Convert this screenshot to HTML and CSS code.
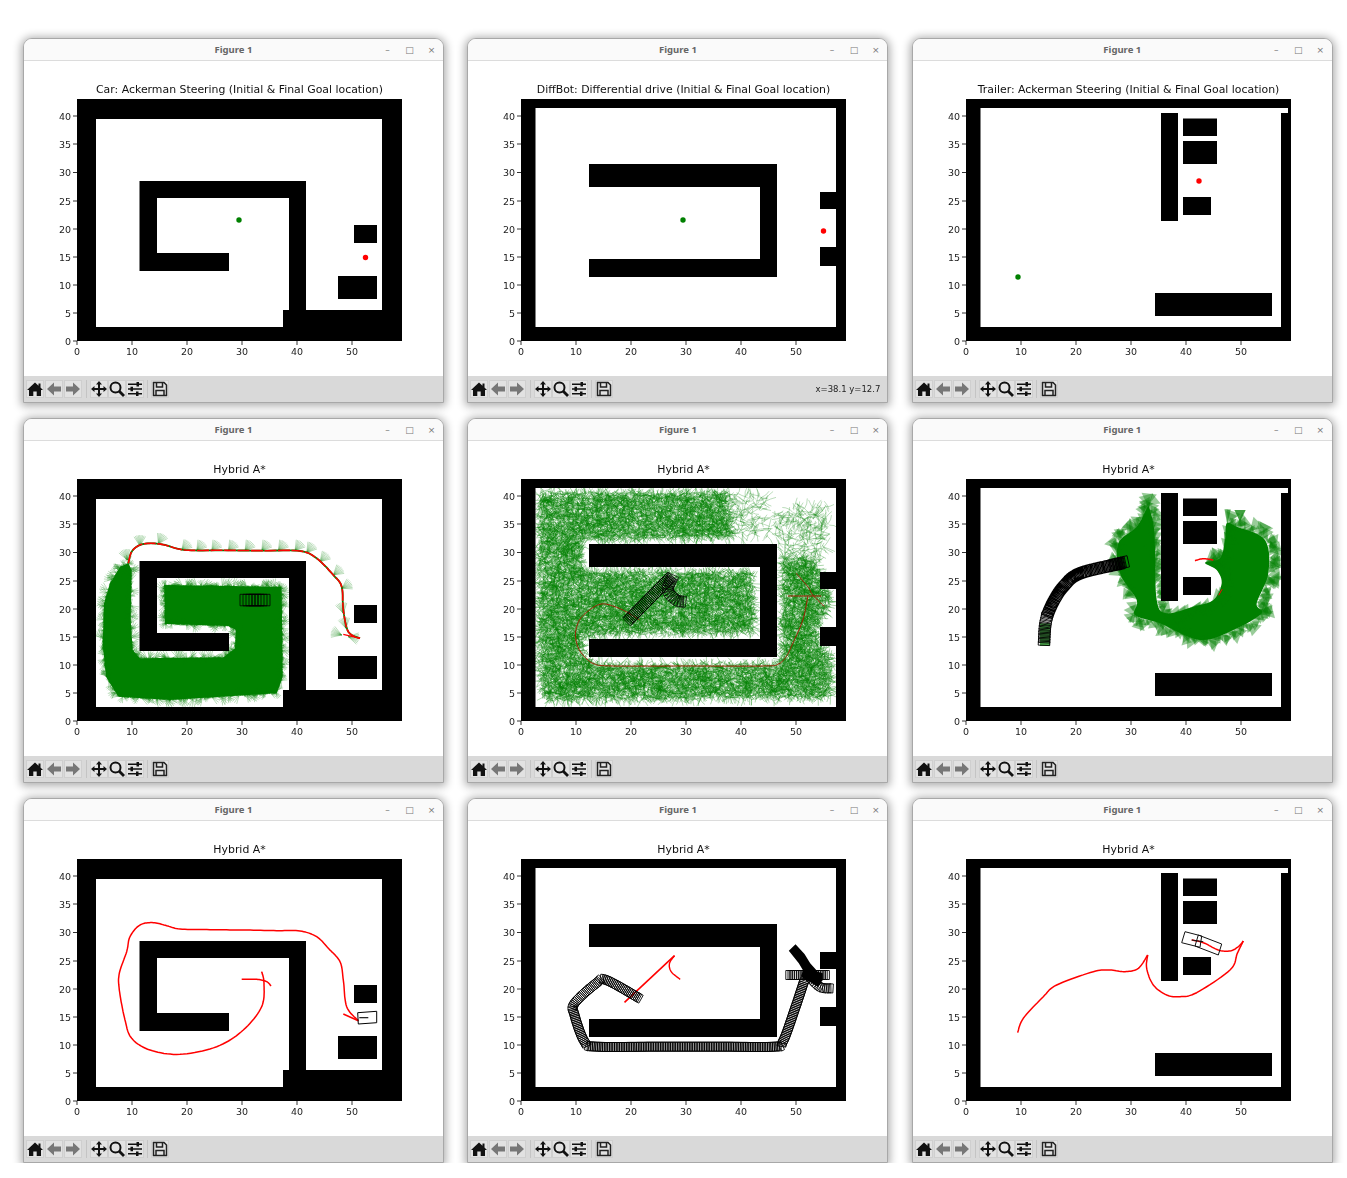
FILE: index.html
```html
<!DOCTYPE html>
<html>
<head>
<meta charset="utf-8">
<title>Hybrid A* figures</title>
<link rel="stylesheet" href="styles.css">
</head>
<body>

<!-- shared drawings, coordinates are those of the first window on the page -->
<svg class="defs">
  <defs>
    <path id="map-car" fill-rule="evenodd" d="M77 99H402V341H77Z M96 119H382V310H306V181H139.500V271H229V253H157V198H289V310H283V327H96Z M354 225H377V243H354Z M338 276H377V299H338Z"/>
    <path id="map-bot" fill-rule="evenodd" d="M77 99H402V341H77Z M91.500 108H392V192H376V209H392V247H376V266H392V327H91.500Z M145 164H333V277H145V259H316V187H145Z"/>
    <path id="map-trailer" fill-rule="evenodd" d="M77 99H402V341H77Z M91.500 108H399V113H392V327H91.500Z M272 113H289V221H272Z M294 118.500H328V136H294Z M294 141H328V164H294Z M294 197H322V215H294Z M266 293H383V316H266Z"/>
    <path id="ticks" stroke="#000" stroke-width="0.8" d="M77 341V345M132 341V345M187 341V345M242 341V345M297 341V345M352 341V345M73 341H77M73 313H77M73 285H77M73 257H77M73 229H77M73 201H77M73 172.500H77M73 144H77M73 116H77"/>
    <path id="i-home" d="M8 1.500 11.500 4.700V2.500H13.500V6.500L16 9H14V15H9.700V10.500H6.300V15H2V9H0Z"/>
    <path id="i-back" d="M1 8 8 1.500V5.500H15V10.500H8V14.500Z"/>
    <path id="i-forward" d="M15 8 8 1.500V5.500H1V10.500H8V14.500Z"/>
    <path id="i-pan" d="M8 0 11 3.500H9V7H12.500V5L16 8 12.500 11V9H9V12.500H11L8 16 5 12.500H7V9H3.500V11L0 8 3.500 5V7H7V3.500H5Z"/>
    <g id="i-zoom" fill="none" stroke="#111"><circle cx="6.500" cy="6.500" r="5" stroke-width="2"/><path d="M10 10 15 15" stroke-width="2.800"/></g>
    <path id="i-sliders" d="M1 2.500H15V4H1ZM1 7.300H15V8.700H1ZM1 12H15V13.500H1ZM9.500 1H12V5.500H9.500ZM3.500 5.800H6V10.200H3.500ZM9 10.500H11.500V15H9Z"/>
    <g id="i-save" fill="none" stroke="#222" stroke-width="1.500"><path d="M1.500 1.500H12L14.500 4V14.500H1.500Z"/><path d="M4.500 1.500V6H10.500V1.500M4 14.500V9.500H12V14.500"/></g>
  </defs>
</svg>

<div class="figures">

  <div class="window">
    <div class="titlebar"><span></span><span class="name">Figure 1</span><span class="ctls"><span>–</span><span>□</span><span>×</span></span></div>
    <svg class="canvas" viewBox="24 61 419 315">
      <text class="plot-title" x="239.500" y="93">Car: Ackerman Steering (Initial &amp; Final Goal location)</text>
      <use href="#map-car"/><use href="#ticks"/>
      <circle cx="239" cy="220" r="2.700" fill="#008000"/><circle cx="365.500" cy="257.500" r="2.700" fill="#f00"/>
      <g class="xl"><text x="77" y="354.500">0</text><text x="132" y="354.500">10</text><text x="187" y="354.500">20</text><text x="242" y="354.500">30</text><text x="297" y="354.500">40</text><text x="352" y="354.500">50</text></g>
      <g class="yl"><text x="71" y="344.500">0</text><text x="71" y="316.500">5</text><text x="71" y="288.500">10</text><text x="71" y="260.500">15</text><text x="71" y="232.500">20</text><text x="71" y="204.500">25</text><text x="71" y="176">30</text><text x="71" y="147.500">35</text><text x="71" y="119.500">40</text></g>
    </svg>
    <div class="toolbar">
      <div class="tool"><svg viewBox="0 0 16 16"><use href="#i-home"/></svg></div><div class="tool off"><svg viewBox="0 0 16 16"><use href="#i-back"/></svg></div><div class="tool off"><svg viewBox="0 0 16 16"><use href="#i-forward"/></svg></div>
      <div class="sep"></div>
      <div class="tool tight"><svg viewBox="0 0 16 16"><use href="#i-pan"/></svg></div><div class="tool tight"><svg viewBox="0 0 16 16"><use href="#i-zoom"/></svg></div><div class="tool tight"><svg viewBox="0 0 16 16"><use href="#i-sliders"/></svg></div>
      <div class="sep"></div>
      <div class="tool"><svg viewBox="0 0 16 16"><use href="#i-save"/></svg></div>
    </div>
  </div>

  <div class="window">
    <div class="titlebar"><span></span><span class="name">Figure 1</span><span class="ctls"><span>–</span><span>□</span><span>×</span></span></div>
    <svg class="canvas" viewBox="24 61 419 315">
      <text class="plot-title" x="239.500" y="93">DiffBot: Differential drive (Initial &amp; Final Goal location)</text>
      <use href="#map-bot"/><use href="#ticks"/>
      <circle cx="239" cy="220" r="2.700" fill="#008000"/><circle cx="379.500" cy="231" r="2.700" fill="#f00"/>
      <g class="xl"><text x="77" y="354.500">0</text><text x="132" y="354.500">10</text><text x="187" y="354.500">20</text><text x="242" y="354.500">30</text><text x="297" y="354.500">40</text><text x="352" y="354.500">50</text></g>
      <g class="yl"><text x="71" y="344.500">0</text><text x="71" y="316.500">5</text><text x="71" y="288.500">10</text><text x="71" y="260.500">15</text><text x="71" y="232.500">20</text><text x="71" y="204.500">25</text><text x="71" y="176">30</text><text x="71" y="147.500">35</text><text x="71" y="119.500">40</text></g>
    </svg>
    <div class="toolbar">
      <div class="tool"><svg viewBox="0 0 16 16"><use href="#i-home"/></svg></div><div class="tool off"><svg viewBox="0 0 16 16"><use href="#i-back"/></svg></div><div class="tool off"><svg viewBox="0 0 16 16"><use href="#i-forward"/></svg></div>
      <div class="sep"></div>
      <div class="tool tight"><svg viewBox="0 0 16 16"><use href="#i-pan"/></svg></div><div class="tool tight"><svg viewBox="0 0 16 16"><use href="#i-zoom"/></svg></div><div class="tool tight"><svg viewBox="0 0 16 16"><use href="#i-sliders"/></svg></div>
      <div class="sep"></div>
      <div class="tool"><svg viewBox="0 0 16 16"><use href="#i-save"/></svg></div>
      <span class="status">x=38.1 y=12.7</span>
    </div>
  </div>

  <div class="window">
    <div class="titlebar"><span></span><span class="name">Figure 1</span><span class="ctls"><span>–</span><span>□</span><span>×</span></span></div>
    <svg class="canvas" viewBox="24 61 419 315">
      <text class="plot-title" x="239.500" y="93">Trailer: Ackerman Steering (Initial &amp; Final Goal location)</text>
      <use href="#map-trailer"/><use href="#ticks"/>
      <circle cx="129" cy="277" r="2.700" fill="#008000"/><circle cx="310" cy="181" r="2.700" fill="#f00"/>
      <g class="xl"><text x="77" y="354.500">0</text><text x="132" y="354.500">10</text><text x="187" y="354.500">20</text><text x="242" y="354.500">30</text><text x="297" y="354.500">40</text><text x="352" y="354.500">50</text></g>
      <g class="yl"><text x="71" y="344.500">0</text><text x="71" y="316.500">5</text><text x="71" y="288.500">10</text><text x="71" y="260.500">15</text><text x="71" y="232.500">20</text><text x="71" y="204.500">25</text><text x="71" y="176">30</text><text x="71" y="147.500">35</text><text x="71" y="119.500">40</text></g>
    </svg>
    <div class="toolbar">
      <div class="tool"><svg viewBox="0 0 16 16"><use href="#i-home"/></svg></div><div class="tool off"><svg viewBox="0 0 16 16"><use href="#i-back"/></svg></div><div class="tool off"><svg viewBox="0 0 16 16"><use href="#i-forward"/></svg></div>
      <div class="sep"></div>
      <div class="tool tight"><svg viewBox="0 0 16 16"><use href="#i-pan"/></svg></div><div class="tool tight"><svg viewBox="0 0 16 16"><use href="#i-zoom"/></svg></div><div class="tool tight"><svg viewBox="0 0 16 16"><use href="#i-sliders"/></svg></div>
      <div class="sep"></div>
      <div class="tool"><svg viewBox="0 0 16 16"><use href="#i-save"/></svg></div>
    </div>
  </div>

  <div class="window">
    <div class="titlebar"><span></span><span class="name">Figure 1</span><span class="ctls"><span>–</span><span>□</span><span>×</span></span></div>
    <svg class="canvas" viewBox="24 61 419 315">
      <text class="plot-title" x="239.500" y="93">Hybrid A*</text>
      <g id="search-car"></g>
      <use href="#map-car"/><use href="#ticks"/>
      <g id="search-car-top"></g>
      <g class="xl"><text x="77" y="354.500">0</text><text x="132" y="354.500">10</text><text x="187" y="354.500">20</text><text x="242" y="354.500">30</text><text x="297" y="354.500">40</text><text x="352" y="354.500">50</text></g>
      <g class="yl"><text x="71" y="344.500">0</text><text x="71" y="316.500">5</text><text x="71" y="288.500">10</text><text x="71" y="260.500">15</text><text x="71" y="232.500">20</text><text x="71" y="204.500">25</text><text x="71" y="176">30</text><text x="71" y="147.500">35</text><text x="71" y="119.500">40</text></g>
    </svg>
    <div class="toolbar">
      <div class="tool"><svg viewBox="0 0 16 16"><use href="#i-home"/></svg></div><div class="tool off"><svg viewBox="0 0 16 16"><use href="#i-back"/></svg></div><div class="tool off"><svg viewBox="0 0 16 16"><use href="#i-forward"/></svg></div>
      <div class="sep"></div>
      <div class="tool tight"><svg viewBox="0 0 16 16"><use href="#i-pan"/></svg></div><div class="tool tight"><svg viewBox="0 0 16 16"><use href="#i-zoom"/></svg></div><div class="tool tight"><svg viewBox="0 0 16 16"><use href="#i-sliders"/></svg></div>
      <div class="sep"></div>
      <div class="tool"><svg viewBox="0 0 16 16"><use href="#i-save"/></svg></div>
    </div>
  </div>

  <div class="window">
    <div class="titlebar"><span></span><span class="name">Figure 1</span><span class="ctls"><span>–</span><span>□</span><span>×</span></span></div>
    <svg class="canvas" viewBox="24 61 419 315">
      <text class="plot-title" x="239.500" y="93">Hybrid A*</text>
      <g id="search-bot"></g>
      <use href="#map-bot"/><use href="#ticks"/>
      <g id="search-bot-top"></g>
      <g class="xl"><text x="77" y="354.500">0</text><text x="132" y="354.500">10</text><text x="187" y="354.500">20</text><text x="242" y="354.500">30</text><text x="297" y="354.500">40</text><text x="352" y="354.500">50</text></g>
      <g class="yl"><text x="71" y="344.500">0</text><text x="71" y="316.500">5</text><text x="71" y="288.500">10</text><text x="71" y="260.500">15</text><text x="71" y="232.500">20</text><text x="71" y="204.500">25</text><text x="71" y="176">30</text><text x="71" y="147.500">35</text><text x="71" y="119.500">40</text></g>
    </svg>
    <div class="toolbar">
      <div class="tool"><svg viewBox="0 0 16 16"><use href="#i-home"/></svg></div><div class="tool off"><svg viewBox="0 0 16 16"><use href="#i-back"/></svg></div><div class="tool off"><svg viewBox="0 0 16 16"><use href="#i-forward"/></svg></div>
      <div class="sep"></div>
      <div class="tool tight"><svg viewBox="0 0 16 16"><use href="#i-pan"/></svg></div><div class="tool tight"><svg viewBox="0 0 16 16"><use href="#i-zoom"/></svg></div><div class="tool tight"><svg viewBox="0 0 16 16"><use href="#i-sliders"/></svg></div>
      <div class="sep"></div>
      <div class="tool"><svg viewBox="0 0 16 16"><use href="#i-save"/></svg></div>
    </div>
  </div>

  <div class="window">
    <div class="titlebar"><span></span><span class="name">Figure 1</span><span class="ctls"><span>–</span><span>□</span><span>×</span></span></div>
    <svg class="canvas" viewBox="24 61 419 315">
      <text class="plot-title" x="239.500" y="93">Hybrid A*</text>
      <g id="search-trailer"></g>
      <use href="#map-trailer"/><use href="#ticks"/>
      <g id="search-trailer-top"></g>
      <g class="xl"><text x="77" y="354.500">0</text><text x="132" y="354.500">10</text><text x="187" y="354.500">20</text><text x="242" y="354.500">30</text><text x="297" y="354.500">40</text><text x="352" y="354.500">50</text></g>
      <g class="yl"><text x="71" y="344.500">0</text><text x="71" y="316.500">5</text><text x="71" y="288.500">10</text><text x="71" y="260.500">15</text><text x="71" y="232.500">20</text><text x="71" y="204.500">25</text><text x="71" y="176">30</text><text x="71" y="147.500">35</text><text x="71" y="119.500">40</text></g>
    </svg>
    <div class="toolbar">
      <div class="tool"><svg viewBox="0 0 16 16"><use href="#i-home"/></svg></div><div class="tool off"><svg viewBox="0 0 16 16"><use href="#i-back"/></svg></div><div class="tool off"><svg viewBox="0 0 16 16"><use href="#i-forward"/></svg></div>
      <div class="sep"></div>
      <div class="tool tight"><svg viewBox="0 0 16 16"><use href="#i-pan"/></svg></div><div class="tool tight"><svg viewBox="0 0 16 16"><use href="#i-zoom"/></svg></div><div class="tool tight"><svg viewBox="0 0 16 16"><use href="#i-sliders"/></svg></div>
      <div class="sep"></div>
      <div class="tool"><svg viewBox="0 0 16 16"><use href="#i-save"/></svg></div>
    </div>
  </div>

  <div class="window">
    <div class="titlebar"><span></span><span class="name">Figure 1</span><span class="ctls"><span>–</span><span>□</span><span>×</span></span></div>
    <svg class="canvas" viewBox="24 61 419 315">
      <text class="plot-title" x="239.500" y="93">Hybrid A*</text>
      <use href="#map-car"/><use href="#ticks"/>
      <g id="final-car"></g>
      <g class="xl"><text x="77" y="354.500">0</text><text x="132" y="354.500">10</text><text x="187" y="354.500">20</text><text x="242" y="354.500">30</text><text x="297" y="354.500">40</text><text x="352" y="354.500">50</text></g>
      <g class="yl"><text x="71" y="344.500">0</text><text x="71" y="316.500">5</text><text x="71" y="288.500">10</text><text x="71" y="260.500">15</text><text x="71" y="232.500">20</text><text x="71" y="204.500">25</text><text x="71" y="176">30</text><text x="71" y="147.500">35</text><text x="71" y="119.500">40</text></g>
    </svg>
    <div class="toolbar">
      <div class="tool"><svg viewBox="0 0 16 16"><use href="#i-home"/></svg></div><div class="tool off"><svg viewBox="0 0 16 16"><use href="#i-back"/></svg></div><div class="tool off"><svg viewBox="0 0 16 16"><use href="#i-forward"/></svg></div>
      <div class="sep"></div>
      <div class="tool tight"><svg viewBox="0 0 16 16"><use href="#i-pan"/></svg></div><div class="tool tight"><svg viewBox="0 0 16 16"><use href="#i-zoom"/></svg></div><div class="tool tight"><svg viewBox="0 0 16 16"><use href="#i-sliders"/></svg></div>
      <div class="sep"></div>
      <div class="tool"><svg viewBox="0 0 16 16"><use href="#i-save"/></svg></div>
    </div>
  </div>

  <div class="window">
    <div class="titlebar"><span></span><span class="name">Figure 1</span><span class="ctls"><span>–</span><span>□</span><span>×</span></span></div>
    <svg class="canvas" viewBox="24 61 419 315">
      <text class="plot-title" x="239.500" y="93">Hybrid A*</text>
      <use href="#map-bot"/><use href="#ticks"/>
      <g id="final-bot"></g>
      <g class="xl"><text x="77" y="354.500">0</text><text x="132" y="354.500">10</text><text x="187" y="354.500">20</text><text x="242" y="354.500">30</text><text x="297" y="354.500">40</text><text x="352" y="354.500">50</text></g>
      <g class="yl"><text x="71" y="344.500">0</text><text x="71" y="316.500">5</text><text x="71" y="288.500">10</text><text x="71" y="260.500">15</text><text x="71" y="232.500">20</text><text x="71" y="204.500">25</text><text x="71" y="176">30</text><text x="71" y="147.500">35</text><text x="71" y="119.500">40</text></g>
    </svg>
    <div class="toolbar">
      <div class="tool"><svg viewBox="0 0 16 16"><use href="#i-home"/></svg></div><div class="tool off"><svg viewBox="0 0 16 16"><use href="#i-back"/></svg></div><div class="tool off"><svg viewBox="0 0 16 16"><use href="#i-forward"/></svg></div>
      <div class="sep"></div>
      <div class="tool tight"><svg viewBox="0 0 16 16"><use href="#i-pan"/></svg></div><div class="tool tight"><svg viewBox="0 0 16 16"><use href="#i-zoom"/></svg></div><div class="tool tight"><svg viewBox="0 0 16 16"><use href="#i-sliders"/></svg></div>
      <div class="sep"></div>
      <div class="tool"><svg viewBox="0 0 16 16"><use href="#i-save"/></svg></div>
    </div>
  </div>

  <div class="window">
    <div class="titlebar"><span></span><span class="name">Figure 1</span><span class="ctls"><span>–</span><span>□</span><span>×</span></span></div>
    <svg class="canvas" viewBox="24 61 419 315">
      <text class="plot-title" x="239.500" y="93">Hybrid A*</text>
      <use href="#map-trailer"/><use href="#ticks"/>
      <g id="final-trailer"></g>
      <g class="xl"><text x="77" y="354.500">0</text><text x="132" y="354.500">10</text><text x="187" y="354.500">20</text><text x="242" y="354.500">30</text><text x="297" y="354.500">40</text><text x="352" y="354.500">50</text></g>
      <g class="yl"><text x="71" y="344.500">0</text><text x="71" y="316.500">5</text><text x="71" y="288.500">10</text><text x="71" y="260.500">15</text><text x="71" y="232.500">20</text><text x="71" y="204.500">25</text><text x="71" y="176">30</text><text x="71" y="147.500">35</text><text x="71" y="119.500">40</text></g>
    </svg>
    <div class="toolbar">
      <div class="tool"><svg viewBox="0 0 16 16"><use href="#i-home"/></svg></div><div class="tool off"><svg viewBox="0 0 16 16"><use href="#i-back"/></svg></div><div class="tool off"><svg viewBox="0 0 16 16"><use href="#i-forward"/></svg></div>
      <div class="sep"></div>
      <div class="tool tight"><svg viewBox="0 0 16 16"><use href="#i-pan"/></svg></div><div class="tool tight"><svg viewBox="0 0 16 16"><use href="#i-zoom"/></svg></div><div class="tool tight"><svg viewBox="0 0 16 16"><use href="#i-sliders"/></svg></div>
      <div class="sep"></div>
      <div class="tool"><svg viewBox="0 0 16 16"><use href="#i-save"/></svg></div>
    </div>
  </div>

</div>
<script src="plots.js"></script>
</body>
</html>
```

FILE: styles.css
```css
body {
  margin: 0;
  background: #fff;
  font-family: "DejaVu Sans", sans-serif;
}

.defs {
  position: absolute;
  width: 0;
  height: 0;
}

.figures {
  display: grid;
  grid-template-columns: repeat(3, 421px);
  grid-auto-rows: 365px;
  column-gap: 23.4px;
  row-gap: 15px;
  padding: 38px 0 0 23px;
}

/* the source picture is a slightly soft scaled screenshot */
.window {
  display: flex;
  flex-direction: column;
  border: 1px solid #a8a8a8;
  border-radius: 9px 9px 0 0;
  box-shadow: 0 1px 8px 2px rgba(0, 0, 0, 0.32);
  overflow: hidden;
  background: #fff;
  filter: blur(0.35px);
}

.titlebar {
  display: grid;
  grid-template-columns: 1fr auto 1fr;
  align-items: center;
  box-sizing: border-box;
  height: 22px;
  flex: none;
  background: #fafafa;
  border-bottom: 1px solid #dcdcdc;
  color: #666;
}

.name {
  font-family: "Noto Sans", sans-serif;
  font-size: 9.500px;
  font-weight: bold;
}

.ctls {
  display: flex;
  justify-content: flex-end;
  padding-right: 0.5px;
  font-size: 9px;
  color: #777;
}

.ctls span {
  width: 22px;
  text-align: center;
}

.canvas {
  display: block;
  width: 419px;
  height: 315px;
  flex: none;
  background: #fff;
}

.plot-title {
  font-size: 10.900px;
  text-anchor: middle;
  fill: #111;
}

.xl text,
.yl text {
  font-size: 9.500px;
  fill: #222;
}

.xl text {
  text-anchor: middle;
}

.yl text {
  text-anchor: end;
}

.toolbar {
  display: flex;
  align-items: center;
  flex: 1;
  padding: 0 7px 0 2px;
  background: #d9d9d9;
}

.tool {
  width: 18px;
  height: 18px;
  margin-right: 1px;
  box-sizing: border-box;
  display: flex;
  background: #e2e2e2;
  border: 1px solid #cfcfcf;
  fill: #111;
}

.tool svg {
  width: 100%;
  height: 100%;
}

.tool.tight {
  margin-right: 0;
}

.tool.off {
  fill: #777;
}

.sep {
  width: 1px;
  height: 18px;
  margin: 0 3px 0 3px;
  background: #c4c4c4;
}

.status {
  margin-left: auto;
  font-size: 8.500px;
  color: #222;
}
```

FILE: plots.js
```js
// The search trees and paths are too many strokes to write out by hand, so they are
// drawn here. Traces were taken off 3x crops, hence the [ox, oy] + p/3 conversion.
var NS = "http://www.w3.org/2000/svg";
var GREEN = "#008000";
var seed = 12345;

// mulberry32, the simple lcg left a visible lattice in the scribbles
function rnd() {
  seed = (seed + 0x6D2B79F5) | 0;
  var t = Math.imul(seed ^ (seed >>> 15), 1 | seed);
  t = (t + Math.imul(t ^ (t >>> 7), 61 | t)) ^ t;
  return ((t ^ (t >>> 14)) >>> 0) / 4294967296;
}

function between(a, b) {
  return a + (b - a) * rnd();
}

function conv(ox, oy, pts) {
  return pts.map(function (p) { return [ox + p[0] / 3, oy + p[1] / 3]; });
}

function add(g, d, attrs) {
  var el = document.createElementNS(NS, "path");
  el.setAttribute("d", d);
  el.setAttribute("fill", "none");
  for (var k in attrs) el.setAttribute(k, attrs[k]);
  g.appendChild(el);
}

function toD(pts, close) {
  var s = "";
  for (var i = 0; i < pts.length; i++) {
    s += (i ? "L" : "M") + pts[i][0].toFixed(1) + " " + pts[i][1].toFixed(1);
  }
  return s + (close ? "Z" : "");
}

// catmull-rom through the traced points
function curve(pts) {
  var out = [];
  for (var i = 0; i < pts.length - 1; i++) {
    var a = pts[Math.max(i - 1, 0)], b = pts[i], c = pts[i + 1], d = pts[Math.min(i + 2, pts.length - 1)];
    for (var t = 0; t < 1; t += 0.1) {
      var t2 = t * t, t3 = t2 * t;
      out.push([0, 1].map(function (n) {
        return 0.5 * (2 * b[n] + (c[n] - a[n]) * t + (2 * a[n] - 5 * b[n] + 4 * c[n] - d[n]) * t2 + (3 * b[n] - a[n] - 3 * c[n] + d[n]) * t3);
      }));
    }
  }
  out.push(pts[pts.length - 1]);
  return out;
}

function inside(p, poly) {
  var hit = false;
  for (var i = 0, j = poly.length - 1; i < poly.length; j = i++) {
    if ((poly[i][1] > p[1]) != (poly[j][1] > p[1]) &&
        p[0] < (poly[j][0] - poly[i][0]) * (p[1] - poly[i][1]) / (poly[j][1] - poly[i][1]) + poly[i][0]) hit = !hit;
  }
  return hit;
}

// walk along a polyline, calling back every step pixels with position and heading
function walk(pts, step, fn) {
  var left = 0;
  for (var i = 0; i < pts.length - 1; i++) {
    var dx = pts[i + 1][0] - pts[i][0], dy = pts[i + 1][1] - pts[i][1];
    var len = Math.sqrt(dx * dx + dy * dy);
    if (len == 0) continue;
    var pos = left;
    while (pos < len) {
      fn([pts[i][0] + dx * pos / len, pts[i][1] + dy * pos / len], Math.atan2(dy, dx));
      pos += step;
    }
    left = pos - len;
  }
}

// thin curved branches scattered over a polygon
function scribble(g, poly, count, len, width, opacity) {
  var xs = poly.map(function (p) { return p[0]; }), ys = poly.map(function (p) { return p[1]; });
  var x0 = Math.min.apply(null, xs), x1 = Math.max.apply(null, xs);
  var y0 = Math.min.apply(null, ys), y1 = Math.max.apply(null, ys);
  var d = "", n = 0;
  while (n < count) {
    var p = [between(x0, x1), between(y0, y1)];
    if (!inside(p, poly)) continue;
    var a = between(0, 6.28), l = len * between(0.7, 1.3), bend = between(-0.9, 0.9);
    var cx = p[0] + Math.cos(a) * l / 2, cy = p[1] + Math.sin(a) * l / 2;
    var ex = cx + Math.cos(a + bend) * l / 2, ey = cy + Math.sin(a + bend) * l / 2;
    d += "M" + p[0].toFixed(1) + " " + p[1].toFixed(1) + "Q" + cx.toFixed(1) + " " + cy.toFixed(1) + " " + ex.toFixed(1) + " " + ey.toFixed(1);
    n++;
    if (n % 30 == 0) {
      add(g, d, { stroke: GREEN, "stroke-width": width, "stroke-opacity": opacity });
      d = "";
    }
  }
}

// fan of steering branches from one node
function fan(g, p, angle, len, spread, lines, opacity) {
  var d = "";
  for (var i = 0; i < lines; i++) {
    var a = angle - spread / 2 + spread * i / (lines - 1);
    d += "M" + p[0].toFixed(1) + " " + p[1].toFixed(1) + "L" + (p[0] + Math.cos(a) * len).toFixed(1) + " " + (p[1] + Math.sin(a) * len).toFixed(1);
  }
  add(g, d, { stroke: GREEN, "stroke-width": 0.6, "stroke-opacity": opacity });
}

function wedge(g, p, angle, len, spread, opacity) {
  var a = [p[0] + Math.cos(angle - spread / 2) * len, p[1] + Math.sin(angle - spread / 2) * len];
  var b = [p[0] + Math.cos(angle + spread / 2) * len, p[1] + Math.sin(angle + spread / 2) * len];
  add(g, toD([p, a, b], true), { fill: GREEN, "fill-opacity": opacity });
}

// vehicle footprints along a path
function footprints(g, pts, length, width, step, stroke) {
  var d = "";
  walk(pts, step, function (p, a) {
    var c = Math.cos(a), s = Math.sin(a), l = length / 2, w = width / 2;
    d += toD([
      [p[0] + c * l - s * w, p[1] + s * l + c * w],
      [p[0] + c * l + s * w, p[1] + s * l - c * w],
      [p[0] - c * l + s * w, p[1] - s * l - c * w],
      [p[0] - c * l - s * w, p[1] - s * l + c * w]
    ], true);
  });
  add(g, d, { stroke: "#000", "stroke-width": stroke });
}

function redLine(g, pts, width) {
  add(g, toD(pts), { stroke: "#f00", "stroke-width": width, "stroke-linejoin": "round" });
}

// ---- car search ----
(function () {
  var g = document.getElementById("search-car");
  var top = document.getElementById("search-car-top");
  var blob = conv(90, 140, [[115,130],[125,150],[122,300],[128,390],[150,415],[400,412],[435,385],[437,330],[415,318],[225,312],[222,195],[575,200],[578,470],[560,520],[240,540],[85,530],[48,470],[38,370],[42,250],[60,190],[90,140]]);
  add(g, toD(blob, true), { fill: GREEN });
  walk(blob.concat([blob[0]]), 1.600, function (p) {
    fan(g, p, between(0, 6.28), between(4, 9), 0.9, 4, 0.45);
  });
  var nodes = [[112,120,-1.9],[150,78,-1.6],[205,72,-1.1],[275,90,-0.8],[320,92,-0.9],[365,92,-0.9],[415,92,-0.9],[465,92,-0.9],[515,92,-0.9],[565,92,-0.9],[615,92,-0.9],[650,98,-0.9],[690,125,-0.8],[730,165,-0.7],[755,205,-0.5],[760,280,-1.8],[768,325,-1.8],[755,345,-2.8],[775,350,0.2]];
  conv(90, 140, nodes).forEach(function (n, i) {
    fan(g, n, nodes[i][2], 11, 1.100, 9, 0.45);
  });
  var route = curve(conv(90, 140, [[115,130],[125,95],[150,75],[185,70],[225,75],[285,90],[400,91],[520,92],[630,93],[680,115],[730,165],[755,200],[760,270],[775,335],[810,355]]));
  add(top, toD(route), { stroke: GREEN, "stroke-width": 1.800 });
  add(top, toD(route), { stroke: "#f00", "stroke-width": 1.600, "stroke-dasharray": "12 1.500" });
  redLine(top, conv(90, 140, [[810,355],[760,343]]), 1.300);
  footprints(top, [[246,220],[267,220]], 12, 11.500, 3, 0.8);
})();

// ---- differential drive search ----
(function () {
  var g = document.getElementById("search-bot");
  var top = document.getElementById("search-bot-top");
  var dense = conv(85.5, 100, [[30,40],[590,40],[610,170],[160,180],[155,255],[180,275],[670,280],[675,455],[175,462],[160,490],[170,540],[210,555],[745,555],[760,520],[760,230],[860,240],[865,270],[905,370],[860,440],[870,500],[905,530],[905,650],[50,660],[30,600]]);
  var sparse = conv(85.5, 100, [[590,40],[720,50],[680,130],[740,100],[890,60],[905,170],[860,240],[760,240],[760,190],[700,165],[620,170]]);
  scribble(g, dense, 22000, 8, 0.6, 0.55);
  scribble(g, sparse, 500, 10, 0.6, 0.45);
  var dark = { stroke: "#a01a00", "stroke-width": 1 };
  add(top, toD(curve(conv(85.5, 100, [[800,280],[835,320],[850,345],[885,380]]))), dark);
  add(top, toD(conv(85.5, 100, [[775,348],[875,348]])), dark);
  add(top, toD(curve(conv(85.5, 100, [[835,350],[820,420],[790,490],[770,530],[745,553],[700,558],[480,558],[250,558],[195,552],[165,530],[145,500],[138,460],[150,420],[180,390],[215,372],[250,378],[290,395],[330,420]]))), dark);
  footprints(top, curve(conv(85.5, 100, [[295,422],[425,290]])), 3.500, 11, 1.800, 0.8);
  footprints(top, curve(conv(85.5, 100, [[430,290],[415,330],[440,360],[465,365]])), 3.500, 11, 2.400, 0.7);
})();

// ---- trailer search ----
(function () {
  var g = document.getElementById("search-trailer");
  var top = document.getElementById("search-trailer-top");
  var blob = curve(conv(131, 110, [[385,45],[400,100],[405,170],[410,330],[440,370],[520,350],[580,330],[605,280],[590,240],[555,218],[600,205],[615,150],[620,100],[650,110],[735,150],[745,250],[710,340],[725,370],[640,420],[540,450],[420,400],[345,375],[350,330],[300,250],[295,160],[350,110],[385,45]]));
  add(g, toD(blob, true), { fill: GREEN });
  var mid = [250, 220];
  walk(blob, 2, function (p) {
    var a = Math.atan2(p[1] - mid[1], p[0] - mid[0]) + between(-0.8, 0.8);
    wedge(g, p, a, between(6, 15), 1.100, 0.4);
  });
  wedge(top, conv(131, 110, [[660,95]])[0], -1.57, 13, 0.9, 0.75);
  wedge(top, conv(131, 110, [[622,105]])[0], -1.55, 16, 0.4, 0.6);
  redLine(top, curve(conv(131, 110, [[525,212],[550,206],[580,210]])), 1.500);
  redLine(top, conv(131, 110, [[596,316],[606,298]]), 1);
  add(top, toD(conv(131, 110, [[60,400],[90,400],[90,468],[60,468]]), true), { fill: "#4aa54a" });
  footprints(top, curve(conv(131, 110, [[305,220],[180,250],[130,290],[100,335],[82,375]])), 4, 11.500, 1.400, 1.100);
  footprints(top, conv(131, 110, [[275,225],[320,215]]), 4, 11.500, 3, 0.9);
  footprints(top, curve(conv(131, 110, [[82,375],[75,410],[72,465]])), 4, 11.500, 2.600, 0.9);
})();

// ---- final paths ----
(function () {
  var g = document.getElementById("final-car");
  redLine(g, curve(conv(110, 150, [[395,208],[440,208],[470,215],[483,228]])), 1.500);
  redLine(g, curve(conv(110, 150, [[455,185],[462,220],[455,290],[400,360],[320,410],[210,433],[120,420],[65,385],[45,330],[28,240],[28,190],[50,125],[60,80],[90,45],[130,38],[170,47],[210,57],[300,59],[400,60],[500,62],[570,63],[620,80],[655,115],[690,155],[700,210],[710,290],[745,332]])), 1.500);
  redLine(g, conv(110, 150, [[745,332],[700,312]]), 1.500);
  add(g, toD(conv(110, 150, [[743,308],[800,304],[800,338],[745,342]]), true), { stroke: "#000", "stroke-width": 1 });
  add(g, toD(conv(110, 150, [[748,323],[775,323]])), { stroke: "#000", "stroke-width": 1.100 });
})();

(function () {
  var g = document.getElementById("final-bot");
  redLine(g, conv(115.5, 170, [[195,217],[345,77]]), 1.600);
  redLine(g, curve(conv(115.5, 170, [[345,77],[330,100],[335,125],[362,148]])), 1.400);
  var road = curve(conv(115.5, 170, [[240,205],[140,150],[110,160],[45,220],[45,255],[75,335],[110,350],[300,350],[480,350],[645,350],[670,335],[705,240],[735,150]]));
  footprints(g, road, 3.400, 9, 1.700, 0.9);
  add(g, toD(conv(115.5, 170, [[688,62],[708,43],[735,72],[752,100],[775,125],[790,130],[790,150],[775,170],[750,155],[725,140],[730,120],[718,100]]), true), { fill: "#000" });
  footprints(g, conv(115.5, 170, [[685,135],[805,135]]), 4, 9, 2.200, 0.9);
  footprints(g, curve(conv(115.5, 170, [[740,130],[780,170],[815,175]])), 4, 9, 2.200, 0.9);
})();

(function () {
  var g = document.getElementById("final-trailer");
  redLine(g, curve(conv(111, 160, [[53,338],[70,295],[130,230],[170,195],[280,155],[330,150],[375,155],[415,145],[443,105]])), 1.500);
  redLine(g, curve(conv(111, 160, [[443,105],[440,145],[460,195],[500,225],[540,230],[590,218],[690,150],[712,100],[730,63]])), 1.500);
  redLine(g, curve(conv(111, 160, [[730,63],[715,80],[690,93],[655,90],[610,68],[575,60]])), 1.500);
  add(g, toD(conv(111, 160, [[555,35],[545,68],[600,82],[605,48]]), true), { stroke: "#111", "stroke-width": 1 });
  add(g, toD(conv(111, 160, [[595,45],[665,72],[655,105],[585,78]]), true), { stroke: "#111", "stroke-width": 1 });
  add(g, toD(conv(111, 160, [[575,60],[610,65]])), { stroke: "#111", "stroke-width": 1.100 });
})();
```
